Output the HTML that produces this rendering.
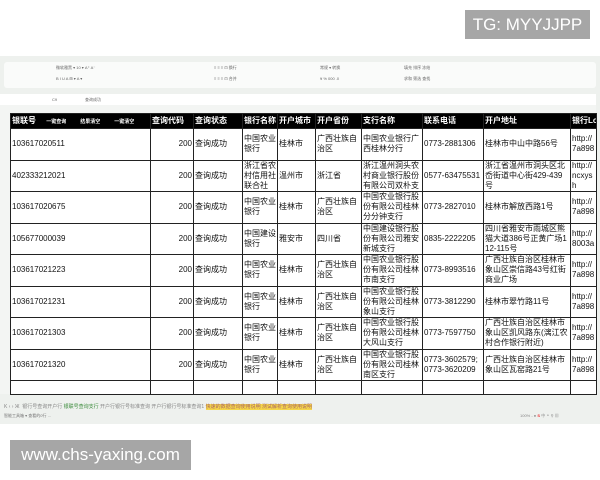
<!DOCTYPE html>
<html><head><meta charset="utf-8"><style>
*{margin:0;padding:0;box-sizing:border-box}
body{width:600px;height:480px;background:#fff;position:relative;overflow:hidden;font-family:"Liberation Sans","Noto Sans CJK SC",sans-serif}
.abs{position:absolute}
#tg{left:465px;top:10px;width:125px;height:29px;background:#a6a6a6;color:#fff;font-size:17px;line-height:29px;text-align:center}
#ww{left:10px;top:440px;width:181px;height:30px;background:#a6a6a6;color:#fff;font-size:17px;line-height:30px;text-align:center}
#shot{left:0;top:56px;width:600px;height:368px;background:#eef1ee}
#tb{left:4px;top:62px;width:592px;height:26px;background:#fafbfa;border-radius:3px}
.t{position:absolute;font-size:4px;color:#666}
#fx{left:0;top:94px;width:596px;height:11px;background:#fff}
#colh{left:0;top:105px;width:596px;height:8px;background:#f3f5f3;font-size:4px;color:#999}
table{position:absolute;left:10px;top:113px;border-collapse:collapse;table-layout:fixed;width:586px;background:#fff}
td{border:1px solid #222;font-size:8px;line-height:10px;padding:0 1px;vertical-align:middle;overflow:hidden;white-space:normal;color:#111;background:#fff;word-break:break-all}
tr.h td{background:#000;color:#fff;height:15px;font-weight:bold;white-space:nowrap}
tr.r td{height:31.5px}
.n{text-align:right}
#rn{left:0;top:113px;width:10px;height:281px;background:#f3f5f3;font-size:4px;color:#999}
#tabs{left:0;top:403px;width:600px;height:10px;background:#eef1ee;font-size:5px;color:#888;white-space:nowrap}
#st{left:0;top:413px;width:600px;height:10px;background:#eef1ee;font-size:4px;color:#777}
</style></head><body>
<div class="abs" id="tg">TG: MYYJJPP</div>
<div class="abs" id="shot"></div>
<div class="abs" id="tb">
<span class="t" style="left:52px;top:3px">微软雅黑 ▾ 10 ▾ A⁺ A⁻</span>
<span class="t" style="left:52px;top:14px">B I U A ⊞ ▾ A ▾</span>
<span class="t" style="left:210px;top:3px">≡ ≡ ≡ ⊡ 换行</span>
<span class="t" style="left:210px;top:14px">≡ ≡ ≡ ⊡ 合并</span>
<span class="t" style="left:316px;top:3px">常规 ▾ 转换</span>
<span class="t" style="left:316px;top:14px">¥ % 000 .0</span>
<span class="t" style="left:400px;top:3px">填充 排序 冻结</span>
<span class="t" style="left:400px;top:14px">求和 筛选 查找</span>
</div>
<div class="abs" id="fx"><span class="t" style="left:52px;top:3px">C9</span><span class="t" style="left:85px;top:3px">查询成功</span></div>
<div class="abs" id="colh"></div>
<div class="abs" id="rn"></div>
<table>
<colgroup><col style="width:140px"><col style="width:43px"><col style="width:49px"><col style="width:35px"><col style="width:38px"><col style="width:46px"><col style="width:61px"><col style="width:61px"><col style="width:87px"><col style="width:26px"></colgroup>
<tr class="h"><td>银联号 <span style="font-size:5px;margin-left:8px">一键查询</span><span style="font-size:5px;margin-left:14px">结果清空</span><span style="font-size:5px;margin-left:14px">一键清空</span></td><td>查询代码</td><td>查询状态</td><td>银行名称</td><td>开户城市</td><td>开户省份</td><td>支行名称</td><td>联系电话</td><td>开户地址</td><td>银行Lo</td></tr>
<tr class="r"><td>103617020511</td><td class="n">200</td><td>查询成功</td><td>中国农业银行</td><td>桂林市</td><td>广西壮族自治区</td><td>中国农业银行广西桂林分行</td><td>0773-2881306</td><td>桂林市中山中路56号</td><td>http://7a898</td></tr>
<tr class="r"><td>402333212021</td><td class="n">200</td><td>查询成功</td><td>浙江省农村信用社联合社</td><td>温州市</td><td>浙江省</td><td>浙江温州洞头农村商业银行股份有限公司双朴支</td><td>0577-63475531</td><td>浙江省温州市洞头区北岙街道中心街429-439号</td><td>http://ncxysh</td></tr>
<tr class="r"><td>103617020675</td><td class="n">200</td><td>查询成功</td><td>中国农业银行</td><td>桂林市</td><td>广西壮族自治区</td><td>中国农业银行股份有限公司桂林分分钟支行</td><td>0773-2827010</td><td>桂林市解放西路1号</td><td>http://7a898</td></tr>
<tr class="r"><td>105677000039</td><td class="n">200</td><td>查询成功</td><td>中国建设银行</td><td>雅安市</td><td>四川省</td><td>中国建设银行股份有限公司雅安新城支行</td><td>0835-2222205</td><td>四川省雅安市雨城区熊猫大道386号正黄广场112-115号</td><td>http://8003a</td></tr>
<tr class="r"><td>103617021223</td><td class="n">200</td><td>查询成功</td><td>中国农业银行</td><td>桂林市</td><td>广西壮族自治区</td><td>中国农业银行股份有限公司桂林市南支行</td><td>0773-8993516</td><td>广西壮族自治区桂林市象山区崇信路43号红街商业广场</td><td>http://7a898</td></tr>
<tr class="r"><td>103617021231</td><td class="n">200</td><td>查询成功</td><td>中国农业银行</td><td>桂林市</td><td>广西壮族自治区</td><td>中国农业银行股份有限公司桂林象山支行</td><td>0773-3812290</td><td>桂林市翠竹路11号</td><td>http://7a898</td></tr>
<tr class="r"><td>103617021303</td><td class="n">200</td><td>查询成功</td><td>中国农业银行</td><td>桂林市</td><td>广西壮族自治区</td><td>中国农业银行股份有限公司桂林大风山支行</td><td>0773-7597750</td><td>广西壮族自治区桂林市象山区凯风路东(漓江农村合作银行附近)</td><td>http://7a898</td></tr>
<tr class="r"><td>103617021320</td><td class="n">200</td><td>查询成功</td><td>中国农业银行</td><td>桂林市</td><td>广西壮族自治区</td><td>中国农业银行股份有限公司桂林南区支行</td><td>0773-3602579;0773-3620209</td><td>广西壮族自治区桂林市象山区瓦窑路21号</td><td>http://7a898</td></tr>
<tr><td style="height:14px"></td><td></td><td></td><td></td><td></td><td></td><td></td><td></td><td></td><td></td></tr>
</table>
<div class="abs" id="tabs"><span style="margin-left:4px">K ‹ › Ж &nbsp;银行号查询开户行 </span><span style="color:#3a8a3a">银联号查询支行</span><span> 开户行银行号标准查询 开户行银行号标准查询1 </span><span style="background:#f5d64a;color:#a66">快速的数据查询使用说明 测试解析查询使用说明</span></div>
<div class="abs" id="st"><span style="margin-left:4px">智能工具箱 ▾ 查看的0行 ... </span><span style="position:absolute;left:520px;color:#888">100% - ● <b style="color:#e33">S</b> 中 ⚬ ⚲ ▦</span></div>
<div class="abs" id="ww">www.chs-yaxing.com</div>
</body></html>
